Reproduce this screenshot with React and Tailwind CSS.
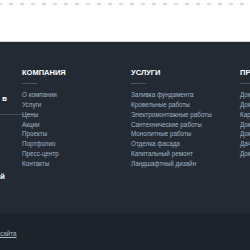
import React from 'react';

const company = ['О компании', 'Услуги', 'Цены', 'Акции', 'Проекты', 'Портфолио', 'Пресс-центр', 'Контакты'];
const services = [
  'Заливка фундамента',
  'Кровельные работы',
  'Электромонтажные работы',
  'Сантехнические работы',
  'Монолитные работы',
  'Отделка фасада',
  'Капитальный ремонт',
  'Ландшафтный дизайн',
];
const projects = ['Дома из бруса', 'Дома из бревна', 'Каркасные дома', 'Дома из газобетона', 'Дома из кирпича', 'Дачные дома', 'Дома с мансардой'];

const FooterColumn = ({ title, links }) => (
  <div className="w-[109px] shrink-0">
    <h4 className="text-[7.5px] leading-[10px] font-bold uppercase text-white whitespace-nowrap">{title}</h4>
    <div className="mt-[5px] mb-[6px] h-px w-[15px] bg-[#4b5560]" />
    <ul className="text-[6.3px] leading-[9.86px] text-[#a0b2c4]">
      {links.map((link) => (
        <li key={link} className="whitespace-nowrap">
          <a href="#">{link}</a>
        </li>
      ))}
    </ul>
  </div>
);

export default function App() {
  return (
    <div className="w-[250px] h-[250px] overflow-hidden bg-white font-['Liberation_Sans',Arial,sans-serif]">
      {/* top strip */}
      <div className="h-[41px] pt-[3px]">
        <div className="h-[2px] w-full bg-[repeating-linear-gradient(90deg,#dcdcdc_0_2px,transparent_2px_9px,#dcdcdc_9px_11px)]" />
      </div>

      <footer className="border-t border-[#d4d6d9]">
        <div className="h-[171px] bg-[#232a33] pt-[26px] flex">
          {/* left column, mostly cut off */}
          <div className="w-[22px] shrink-0">
            <div className="mt-[26px] pl-[2px] text-[8px] leading-[10px] font-bold text-white">в</div>
            <div className="mt-[10px] h-px w-[33px] bg-[#434c57]" />
            <div className="mt-[57px] text-[8px] leading-[10px] font-bold text-white">й</div>
          </div>
          <FooterColumn title="Компания" links={company} />
          <FooterColumn title="Услуги" links={services} />
          <FooterColumn title="Проекты" links={projects} />
        </div>
        <div className="h-[37px] bg-[#1d232a] pt-[16px]">
          <a href="#" className="block text-[6.3px] leading-[9px] text-[#aeb9c4] underline">сайта</a>
        </div>
      </footer>
    </div>
  );
}
